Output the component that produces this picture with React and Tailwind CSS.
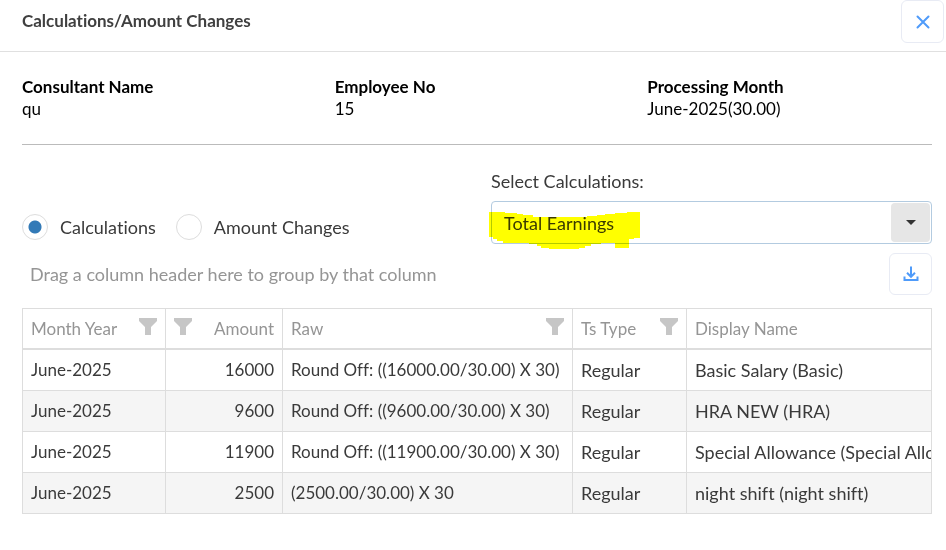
import { useState } from 'react'

const ROWS = [
  { month: 'June-2025', amount: 16000, raw: 'Round Off: ((16000.00/30.00) X 30)', type: 'Regular', name: 'Basic Salary (Basic)' },
  { month: 'June-2025', amount: 9600,  raw: 'Round Off: ((9600.00/30.00) X 30)',  type: 'Regular', name: 'HRA NEW (HRA)' },
  { month: 'June-2025', amount: 11900, raw: 'Round Off: ((11900.00/30.00) X 30)', type: 'Regular', name: 'Special Allowance (Special Allowance)' },
  { month: 'June-2025', amount: 2500,  raw: '(2500.00/30.00) X 30',               type: 'Regular', name: 'night shift (night shift)' },
]

function FilterIcon() {
  return (
    <svg viewBox="0 0 18 17" className="mb-1 h-[17px] w-[18px] shrink-0 fill-[#c6c6c6]" aria-hidden="true">
      <path d="M0 0h18v3l-6 6v8H6V9L0 3z" />
    </svg>
  )
}

function Info({ label, value }) {
  return (
    <div>
      <dt className="font-bold">{label}</dt>
      <dd>{value}</dd>
    </div>
  )
}

function Radio({ label, value, checked, onChange }) {
  return (
    <label className="flex items-center gap-3">
      <input
        type="radio"
        name="mode"
        value={value}
        checked={checked}
        onChange={() => onChange(value)}
        className="h-[26px] w-[26px] appearance-none rounded-full border border-[#ddd] bg-white checked:bg-[radial-gradient(circle,#337ab7_6px,transparent_7px)]"
      />
      {label}
    </label>
  )
}

function HeaderCell({ label, filter, numeric }) {
  return (
    <th className="border-r border-b-2 border-[#ddd] px-2 text-left font-normal last:border-r-0">
      <div className={numeric ? 'flex flex-row-reverse items-center justify-between' : 'flex items-center justify-between'}>
        <span>{label}</span>
        {filter && <FilterIcon />}
      </div>
    </th>
  )
}

const CELL = 'border-r border-b border-[#ddd] px-2 last:border-r-0'

export default function App() {
  const [mode, setMode] = useState('calculations')

  return (
    <div className="bg-white font-[Lato,sans-serif] text-[17px] leading-[22px] text-[#3a3a3a] [font-variant-ligatures:none]">
      {/* Title bar */}
      <header className="flex items-start justify-between border-b border-[#e0e0e0] pr-0.5 pb-2 pl-[22px]">
        <h1 className="py-[10px] font-bold text-[#404040]">Calculations/Amount Changes</h1>
        <button
          type="button"
          aria-label="Close"
          className="flex h-[43px] w-[43px] items-center justify-center rounded-md border border-[#e8ebf4] text-[#4f9bfa]"
        >
          <svg viewBox="0 0 14 14" className="h-3.5 w-3.5" fill="none" stroke="currentColor" strokeWidth="2" strokeLinecap="round">
            <path d="M1.5 1.5l11 11M12.5 1.5l-11 11" />
          </svg>
        </button>
      </header>

      <main className="pr-3.5 pl-[22px]">
        <dl className="grid grid-cols-3 gap-7 border-b border-[#bbb] py-6 text-black">
          <Info label="Consultant Name" value="qu" />
          <Info label="Employee No" value="15" />
          <Info label="Processing Month" value="June-2025(30.00)" />
        </dl>

        {/* Mode + calculation picker */}
        <div className="grid grid-cols-2 gap-7 pt-[25px] text-[18px]">
          <div className="mb-1 flex items-center gap-5 self-end">
            <Radio label="Calculations" value="calculations" checked={mode === 'calculations'} onChange={setMode} />
            <Radio label="Amount Changes" value="amounts" checked={mode === 'amounts'} onChange={setMode} />
          </div>
          <div>
            <label htmlFor="calculation" className="mb-[9px] block">Select Calculations:</label>
            <div className="relative">
              <select
                id="calculation"
                defaultValue="total"
                className="block h-[43px] w-full appearance-none rounded border border-[#b3cbe0] bg-white pr-12 pl-3"
              >
                <option value="total">Total Earnings</option>
              </select>
              <span className="pointer-events-none absolute inset-y-0.5 right-0.5 flex w-[39px] items-center justify-center rounded bg-[#e6e6e6]">
                <svg viewBox="0 0 10 5" className="h-[5px] w-2.5 fill-[#333]"><path d="M0 0h10L5 5z" /></svg>
              </span>
              {/* marker stroke over the chosen value */}
              <svg viewBox="0 0 152 40" className="pointer-events-none absolute top-2 -left-0.5 h-10 w-[152px] fill-[#ffff00] mix-blend-multiply">
                <path d="M0 3h16v1h12v1h6v1h10v2h54v-1h10v-1h8v-1h10V4h12V3h13v26h-6v1h-5v9h-14v-5h-14v1h-10v2h-6v2h-6v1H60v-1h-8v-2h-4v-2h-8v-1H14v-2H8v-2H4v-2H0z" />
              </svg>
            </div>
          </div>
        </div>

        <div className="mt-[9px] mb-[13px] flex items-center justify-between pl-2 text-[18px] text-[#959595]">
          <p>Drag a column header here to group by that column</p>
          <button
            type="button"
            aria-label="Export"
            className="flex h-[42px] w-[43px] items-center justify-center rounded-md border border-[#e8ebf4] text-[#4f9bfa]"
          >
            <svg viewBox="0 0 16 16" className="h-4 w-4" fill="none" stroke="currentColor" strokeWidth="2">
              <path d="M8 0.5v10M4 6.8l4 4 4-4M1.5 10.5V14h13v-3.5" />
            </svg>
          </button>
        </div>

        {/* Grid */}
        <div className="overflow-hidden border border-b-0 border-[#ddd]">
          <table className="w-full table-fixed border-separate border-spacing-0 whitespace-nowrap">
            <colgroup>
              <col className="w-[143px]" />
              <col className="w-[117px]" />
              <col className="w-[290px]" />
              <col className="w-[114px]" />
              <col />
            </colgroup>
            <thead className="text-[#959595]">
              <tr className="h-[41px]">
                <HeaderCell label="Month Year" filter />
                <HeaderCell label="Amount" filter numeric />
                <HeaderCell label="Raw" filter />
                <HeaderCell label="Ts Type" filter />
                <HeaderCell label="Display Name" />
              </tr>
            </thead>
            <tbody>
              {ROWS.map((r) => (
                <tr key={r.amount} className="h-[41px] even:bg-[#f5f5f5]">
                  <td className={CELL}>{r.month}</td>
                  <td className={`${CELL} text-right`}>{r.amount}</td>
                  <td className={CELL}>{r.raw}</td>
                  <td className={`${CELL} text-[18px]`}>{r.type}</td>
                  <td className={`${CELL} overflow-hidden text-[18px]`}>{r.name}</td>
                </tr>
              ))}
            </tbody>
          </table>
        </div>
      </main>
    </div>
  )
}
